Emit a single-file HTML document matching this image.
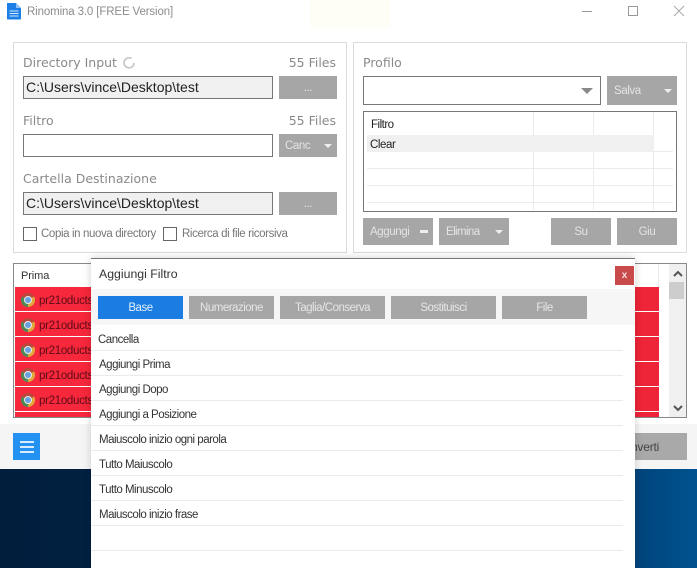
<!DOCTYPE html>
<html><head><meta charset="utf-8"><style>
html,body{margin:0;padding:0}
body{width:697px;height:568px;position:relative;overflow:hidden;background:#fff;font-family:"Liberation Sans",sans-serif}
.a,.a *{box-sizing:border-box}
.a{position:absolute;white-space:nowrap}
.lab{font-family:"DejaVu Sans",sans-serif;font-size:12.5px;color:#8a8a8a;line-height:16px;height:16px}
.inp{border:1px solid #777;background:#fff;height:23px;font-size:14px;line-height:21px;color:#222;padding-left:2px}
.inp.g{background:#f0f0f0}
.btn{background:#a6a6a6;color:#e4e4e4;font-size:11.5px;text-align:center;letter-spacing:-.4px}
.tri{position:absolute;width:0;height:0;border-left:4px solid transparent;border-right:4px solid transparent;border-top:4px solid #eee}
.cb{width:14px;height:14px;border:1px solid #666;background:#fff}
.cl{font-size:11.5px;color:#777;line-height:14px;letter-spacing:-.38px}
.row{left:15px;width:644px;height:24px;background:linear-gradient(90deg,#f8283c,#ee2438)}
.row span{position:absolute;left:24px;top:7px;font-size:11.5px;line-height:14px;color:#5c0c18;letter-spacing:-.3px}
.row i{position:absolute;left:6px;top:6px;width:14px;height:14px;border-radius:50%;background:conic-gradient(#b8483c 0 60deg,#e0a93a 60deg 180deg,#4d8a58 180deg 300deg,#b8483c 300deg 360deg)}
.row i:after{content:"";position:absolute;left:4px;top:4px;width:6px;height:6px;border-radius:50%;background:#6aa0e0;box-shadow:0 0 0 1px #eee}
.it{left:99px;font-size:11.5px;line-height:16px;color:#333;letter-spacing:-.5px}
.sep{left:91px;width:532px;height:1px;background:#eaeaea}
.tab{top:296px;height:23px;line-height:25px;background:#a6a6a6;color:#e6e6e6;font-size:11.5px;text-align:center;letter-spacing:-.5px}
.gl{background:#ebebeb}
</style></head><body>

<div class="a" style="left:310px;top:0;width:80px;height:28px;background:#fffef6"></div>

<svg class="a" style="left:6px;top:3px" width="16" height="17" viewBox="0 0 16 17"><path d="M1 0H10L15 5V16Q15 16.500 14 16.500H2Q1 16.500 1 16Z" fill="#1c7fe6"/><path d="M10 0L15 5H10Z" fill="#8cc4f5"/><path d="M3.500 8H12.500M3.500 10.500H12.500M3.500 13H12.500" stroke="#d5e9fb" stroke-width="1"/></svg>
<div class="a" style="left:27px;top:4px;line-height:16px;color:#8c8c8c;font-family:'Liberation Sans',sans-serif;font-size:11.5px;letter-spacing:-.13px">Rinomina 3.0 [FREE Version]</div>
<div class="a" style="left:582px;top:11px;width:10px;height:1px;background:#999"></div>
<div class="a" style="left:628px;top:6px;width:10px;height:10px;border:1px solid #999"></div>
<svg class="a" style="left:673px;top:5px" width="12" height="12"><path d="M1 1L11 11M11 1L1 11" stroke="#aaa" stroke-width="1"/></svg>

<!-- left panel -->
<div class="a" style="left:13px;top:42px;width:334px;height:211px;border:1px solid #dcdcdc"></div>
<div class="a lab" style="left:23px;top:55px">Directory Input</div>
<svg class="a" style="left:122px;top:56px" width="14" height="14"><path d="M9.500 2.500A5 5 0 1 0 12 7" fill="none" stroke="#c4c4c4" stroke-width="1.600"/></svg>
<div class="a lab" style="right:361px;top:55px">55 Files</div>
<div class="a inp g" style="left:23px;top:76px;width:250px">C:\Users\vince\Desktop\test</div>
<div class="a btn" style="left:279px;top:76px;width:58px;height:23px;line-height:25px;">...</div>

<div class="a lab" style="left:23px;top:113px">Filtro</div>
<div class="a lab" style="right:361px;top:113px">55 Files</div>
<div class="a inp" style="left:23px;top:134px;width:250px"></div>
<div class="a btn" style="left:279px;top:134px;width:58px;height:23px;line-height:24px;text-align:left;padding-left:6px">Canc<span class="tri" style="left:45px;top:10px"></span></div>

<div class="a lab" style="left:23px;top:171px">Cartella Destinazione</div>
<div class="a inp g" style="left:23px;top:192px;width:250px">C:\Users\vince\Desktop\test</div>
<div class="a btn" style="left:279px;top:192px;width:58px;height:23px;line-height:25px">...</div>

<div class="a cb" style="left:23px;top:227px"></div>
<div class="a cl" style="left:41px;top:227px">Copia in nuova directory</div>
<div class="a cb" style="left:163px;top:227px"></div>
<div class="a cl" style="left:182px;top:227px">Ricerca di file ricorsiva</div>

<!-- right panel -->
<div class="a" style="left:353px;top:42px;width:334px;height:211px;border:1px solid #dcdcdc"></div>
<div class="a lab" style="left:363px;top:55px">Profilo</div>
<div class="a" style="left:363px;top:76px;width:238px;height:29px;border:1px solid #777;background:#fff"></div>
<div class="a" style="left:581px;top:88px;width:0;height:0;border-left:6px solid transparent;border-right:6px solid transparent;border-top:6px solid #888"></div>
<div class="a btn" style="left:607px;top:76px;width:70px;height:29px;line-height:31px;text-align:left;padding-left:7px">Salva<span class="tri" style="left:57px;top:13px"></span></div>

<div class="a" style="left:363px;top:111px;width:314px;height:101px;border:1px solid #777;background:#fff"></div>
<div class="a gl" style="left:533px;top:112px;width:1px;height:98px"></div>
<div class="a gl" style="left:593px;top:112px;width:1px;height:98px"></div>
<div class="a gl" style="left:653px;top:112px;width:1px;height:98px"></div>
<div class="a gl" style="left:367px;top:151px;width:306px;height:1px"></div>
<div class="a gl" style="left:367px;top:168px;width:306px;height:1px"></div>
<div class="a gl" style="left:367px;top:185px;width:306px;height:1px"></div>
<div class="a gl" style="left:367px;top:202px;width:306px;height:1px"></div>
<div class="a" style="left:367px;top:135px;width:287px;height:17px;background:#f0f0f0"></div>
<div class="a" style="left:371px;top:118px;font-size:11.5px;line-height:14px;color:#222;letter-spacing:-.5px">Filtro</div>
<div class="a" style="left:370px;top:138px;font-size:11.5px;line-height:14px;color:#222;letter-spacing:-.4px">Clear</div>

<div class="a btn" style="left:363px;top:218px;width:70px;height:27px;line-height:29px;text-align:left;padding-left:7px">Aggungi<span class="a" style="left:57px;top:12px;width:8px;height:3px;background:#eee"></span></div>
<div class="a btn" style="left:439px;top:218px;width:70px;height:27px;line-height:29px;text-align:left;padding-left:7px;letter-spacing:-.6px">Elimina<span class="tri" style="left:56px;top:12px"></span></div>
<div class="a btn" style="left:551px;top:218px;width:60px;height:27px;line-height:29px">Su</div>
<div class="a btn" style="left:617px;top:218px;width:60px;height:27px;line-height:29px">Giu</div>

<!-- table -->
<div class="a" style="left:13px;top:263px;width:674px;height:155px;border:1px solid #888;background:#fff"></div>
<div class="a" style="left:21px;top:269px;font-size:11px;line-height:14px;color:#333;letter-spacing:-.1px">Prima</div>
<div class="a gl" style="left:658px;top:264px;width:1px;height:23px"></div>
<div class="a row" style="top:287px"><i></i><span>pr21oducts</span></div>
<div class="a row" style="top:312px"><i></i><span>pr21oducts</span></div>
<div class="a row" style="top:337px"><i></i><span>pr21oducts</span></div>
<div class="a row" style="top:362px"><i></i><span>pr21oducts</span></div>
<div class="a row" style="top:387px"><i></i><span>pr21oducts</span></div>
<div class="a row" style="top:412px;height:5px"></div>
<div class="a" style="left:669px;top:264px;width:17px;height:153px;background:#f0f0f0"></div>
<div class="a" style="left:669px;top:282px;width:15px;height:17px;background:#cdcdcd"></div>
<svg class="a" style="left:673px;top:270px" width="10" height="8"><path d="M1 6L5 2L9 6" fill="none" stroke="#555" stroke-width="2"/></svg>
<svg class="a" style="left:673px;top:404px" width="10" height="8"><path d="M1 2L5 6L9 2" fill="none" stroke="#555" stroke-width="2"/></svg>

<!-- bottom bar -->
<div class="a" style="left:0;top:424px;width:697px;height:45px;background:#f5f5f5"></div>
<div class="a" style="left:13px;top:433px;width:27px;height:27px;background:#2492f2"></div>
<div class="a" style="left:20px;top:441px;width:14px;height:2px;background:#d8ecfd"></div>
<div class="a" style="left:20px;top:446px;width:14px;height:2px;background:#d8ecfd"></div>
<div class="a" style="left:20px;top:451px;width:14px;height:2px;background:#d8ecfd"></div>
<div class="a" style="left:600px;top:433px;width:87px;height:27px;background:#a9a9a9;font-size:12px;line-height:28px;color:#444;padding-left:16px;letter-spacing:-.2px">Converti</div>

<!-- desktop -->
<div class="a" style="left:0;top:469px;width:697px;height:99px;background:linear-gradient(90deg,#011d3c 0,#02274d 40%,#004278 90%,#00528f 100%)"></div>

<!-- dialog -->
<div class="a" style="left:91px;top:258px;width:544px;height:310px;background:#fff;border-top:1px solid #777;box-shadow:0 0 8px rgba(0,0,0,.18)"></div>
<div class="a" style="left:99px;top:267px;font-size:12.3px;line-height:14px;color:#333">Aggiungi Filtro</div>
<div class="a" style="left:615px;top:266px;width:19px;height:19px;background:#c84a4a;color:#f4dede;font-size:10px;font-weight:bold;line-height:20px;text-align:center">x</div>
<div class="a" style="left:91px;top:289px;width:544px;height:36px;background:#f6f6f6"></div>
<div class="a tab" style="left:98px;width:85px;background:#1b7de2;color:#e4f0fc">Base</div>
<div class="a tab" style="left:189px;width:85px">Numerazione</div>
<div class="a tab" style="left:280px;width:105px">Taglia/Conserva</div>
<div class="a tab" style="left:391px;width:105px">Sostituisci</div>
<div class="a tab" style="left:502px;width:85px">File</div>

<div class="a it" style="left:98px;top:332px">Cancella</div>
<div class="a it" style="top:357px">Aggiungi Prima</div>
<div class="a it" style="top:382px">Aggiungi Dopo</div>
<div class="a it" style="top:407px">Aggiungi a Posizione</div>
<div class="a it" style="top:432px">Maiuscolo inizio ogni parola</div>
<div class="a it" style="top:457px">Tutto Maiuscolo</div>
<div class="a it" style="top:482px">Tutto Minuscolo</div>
<div class="a it" style="top:507px">Maiuscolo inizio frase</div>
<div class="a sep" style="top:350px"></div>
<div class="a sep" style="top:375px"></div>
<div class="a sep" style="top:400px"></div>
<div class="a sep" style="top:425px"></div>
<div class="a sep" style="top:450px"></div>
<div class="a sep" style="top:475px"></div>
<div class="a sep" style="top:500px"></div>
<div class="a sep" style="top:525px"></div>
<div class="a sep" style="top:550px"></div>
</body></html>
